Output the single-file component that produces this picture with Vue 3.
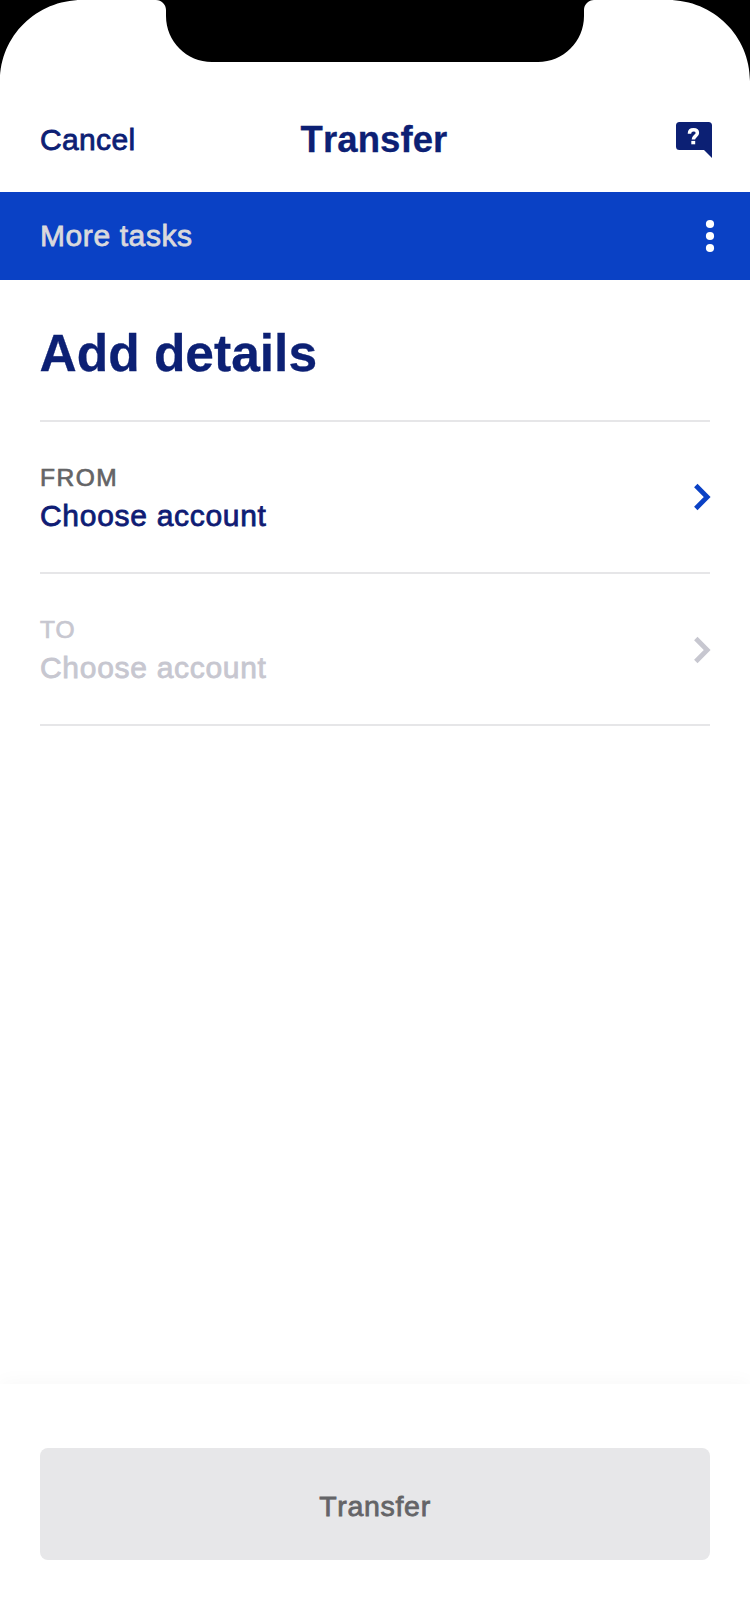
<script setup>
const rows = [
  { label: 'FROM', value: 'Choose account', disabled: false },
  { label: 'TO', value: 'Choose account', disabled: true },
]
</script>

<template>
  <div class="screen">
    <svg class="bezel" width="750" height="82" viewBox="0 0 750 82" aria-hidden="true">
      <path d="M0 0H82C36.5 0 0 36 0 81Z" />
      <path d="M750 0H668C713.5 0 750 36 750 81Z" />
      <path d="M156 0C161.5 0 166 4.500 166 10V16C166 41.400 186.600 62 212 62H538C563.400 62 584 41.400 584 16V10C584 4.500 588.500 0 594 0Z" />
    </svg>
    <header class="nav">
      <a class="cancel">Cancel</a>
      <h1 class="title">Transfer</h1>
      <svg class="help" width="36" height="36" viewBox="0 0 36 36" aria-label="Help">
        <path d="M3.500 0H32.500A3.500 3.500 0 0 1 36 3.500V36L28 28H3.500A3.500 3.500 0 0 1 0 24.500V3.500A3.500 3.500 0 0 1 3.500 0Z" fill="#0c2074" />
        <path d="M13.500 11.800V11.300C13.500 9 15.100 7.700 17.500 7.700C19.900 7.700 21.400 9 21.400 10.900C21.400 12.500 20.500 13.200 19.300 14.200C18 15.300 17.400 15.700 17.400 17.600" fill="none" stroke="#fff" stroke-width="3.500" />
        <rect x="15.300" y="18.900" width="3.900" height="3.400" fill="#fff" />
      </svg>
    </header>
    <div class="tasks">
      <span class="tasks-label">More tasks</span>
      <svg width="8" height="32" viewBox="0 0 8 32" fill="#fff" overflow="visible" aria-hidden="true">
        <circle cx="4" cy="4" r="4.100" /><circle cx="4" cy="16" r="4.100" /><circle cx="4" cy="28" r="4.100" />
      </svg>
    </div>
    <main class="content">
      <h2 class="heading">Add details</h2>
      <div v-for="row in rows" :key="row.label" class="row" :class="{ disabled: row.disabled }">
        <div class="text">
          <div class="label">{{ row.label }}</div>
          <div class="value">{{ row.value }}</div>
        </div>
        <svg class="chevron" width="16" height="26" viewBox="0 0 16 26" overflow="visible" aria-hidden="true">
          <path d="M1.800 1.500L13.200 13L1.800 24.500" fill="none" stroke="currentColor" stroke-width="4.800" />
        </svg>
      </div>
    </main>
    <footer class="footer">
      <button class="submit" disabled>Transfer</button>
    </footer>
  </div>
</template>

<style>
body { background: #fff; }
</style>

<style scoped>
.screen {
  position: relative;
  display: flex;
  flex-direction: column;
  width: 750px;
  height: 1624px;
  overflow: hidden;
  background: #fff;
  font-family: "Liberation Sans", Arial, sans-serif;
  font-kerning: none;
  color: #0c2074;
}
.bezel { position: absolute; top: 0; left: 0; fill: #000; }
.nav {
  box-sizing: border-box;
  display: grid;
  grid-template-columns: 1fr auto 1fr;
  align-items: start;
  height: 192px;
  padding: 120px 38px 0 36px;
}
.cancel {
  margin-left: 4px;
  font-size: 30px;
  line-height: 40px;
  letter-spacing: 0.35px;
  -webkit-text-stroke: 0.8px currentColor;
}
.title {
  margin: 0;
  font-size: 36.5px;
  line-height: 40px;
  letter-spacing: 0.1px;
  -webkit-text-stroke: 0.3px currentColor;
}
.help { justify-self: end; margin-top: 2px; }
.tasks {
  box-sizing: border-box;
  display: flex;
  align-items: center;
  justify-content: space-between;
  height: 88px;
  padding: 0 36px 0 40px;
  background: #0a41c5;
}
.tasks-label {
  font-size: 30px;
  line-height: 40px;
  letter-spacing: 0.6px;
  color: #d9d9dc;
  -webkit-text-stroke: 0.8px currentColor;
}
.content { flex: 1; padding: 0 40px; }
.heading {
  box-sizing: border-box;
  height: 142px;
  margin: 0;
  padding-top: 43px;
  border-bottom: 2px solid #e6e6e8;
  font-size: 51.5px;
  line-height: 60px;
  text-indent: -0.5px;
  -webkit-text-stroke: 0.3px currentColor;
}
.row {
  box-sizing: border-box;
  display: flex;
  align-items: center;
  justify-content: space-between;
  height: 152px;
  border-bottom: 2px solid #e6e6e8;
  color: #0a41c5;
}
.text { padding-top: 2px; }
.label {
  font-size: 24.5px;
  line-height: 36px;
  letter-spacing: 1.5px;
  color: #646466;
  -webkit-text-stroke: 0.7px currentColor;
}
.value {
  font-size: 30px;
  line-height: 40px;
  letter-spacing: 0.7px;
  color: #0f1c74;
  -webkit-text-stroke: 0.8px currentColor;
}
.disabled, .disabled .label, .disabled .value { color: #c7c7d0; }
.disabled .label { letter-spacing: 0.5px; }
.disabled .chevron { margin-top: 2px; }
.footer {
  box-sizing: border-box;
  height: 240px;
  padding: 64px 40px;
  background: #fff;
  box-shadow: 0 0 20px rgba(0, 0, 0, 0.04);
}
.submit {
  display: block;
  width: 670px;
  height: 112px;
  padding: 4px 0 0;
  border: 0;
  border-radius: 8px;
  background: #e7e7e9;
  color: #646467;
  font-family: inherit;
  font-size: 28.5px;
  font-kerning: none;
  letter-spacing: 0.7px;
  -webkit-text-stroke: 0.8px currentColor;
}
</style>
